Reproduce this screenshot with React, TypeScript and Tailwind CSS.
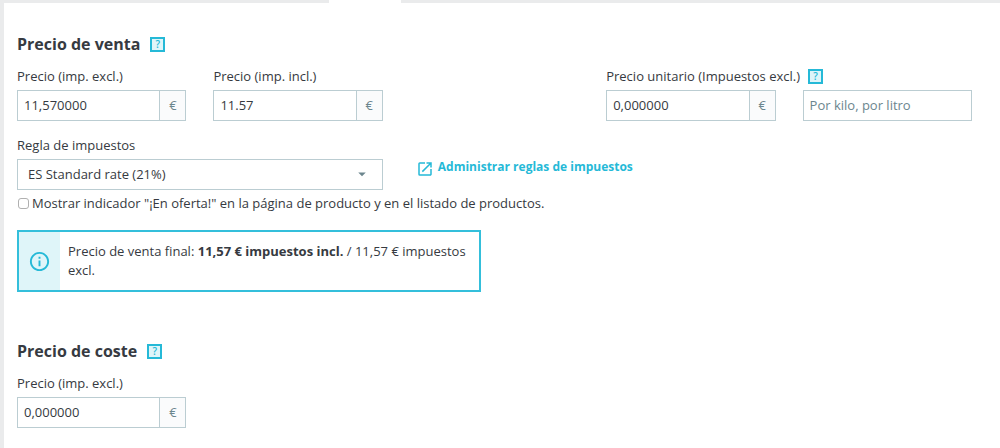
import { useState } from "react";
import type { ReactNode } from "react";
import { MdArrowDropDown, MdInfoOutline, MdOpenInNew } from "react-icons/md";

interface PriceFieldProps {
  id: string;
  label: string;
  initial: string;
  help?: boolean;
}

const HelpButton = () => (
  <button
    type="button"
    aria-label="Ayuda"
    className="flex h-[15px] w-[15px] shrink-0 items-center justify-center border-2 border-[#25b9d7] bg-[#dff5f9] text-[10px] leading-none font-semibold text-[#25b9d7]"
  >
    ?
  </button>
);

const SectionTitle = ({ children }: { children: ReactNode }) => (
  <div className="flex h-6 items-center gap-2.5">
    <h2 className="text-base leading-6 font-bold">{children}</h2>
    <HelpButton />
  </div>
);

const PriceField = ({ id, label, initial, help }: PriceFieldProps) => {
  const [value, setValue] = useState(initial);

  return (
    <div>
      <div className="mb-1 flex h-5 items-center gap-2">
        <label htmlFor={id} className="whitespace-nowrap">
          {label}
        </label>
        {help && <HelpButton />}
      </div>
      <div className="flex h-[31px] border border-[#bbcdd2]">
        <input
          id={id}
          type="text"
          value={value}
          onChange={(e) => setValue(e.target.value)}
          className="w-full min-w-0 bg-white px-1.5 pb-0.5 outline-none"
        />
        <span className="flex w-[26px] shrink-0 items-center justify-center border-l border-[#bbcdd2] bg-[#fafbfc] pb-0.5 text-[#6c868e]">
          €
        </span>
      </div>
    </div>
  );
};

export default function App() {
  const [onSale, setOnSale] = useState(false);

  return (
    <div className="flex min-h-screen flex-col bg-[#eaebec] pl-1 font-['Open_Sans','Noto_Sans',sans-serif] text-[13px] leading-5 text-[#363a41]">
      <div className="flex h-[3px]">
        <div className="ml-[325px] w-[72px] bg-white" />
      </div>

      <main className="flex-1 bg-white pt-[29px] pr-7 pb-5 pl-[13px]">
        <section>
          <SectionTitle>Precio de venta</SectionTitle>
          <div className="mt-2.5 grid grid-cols-5 gap-x-[27px]">
            <PriceField id="price-excl" label="Precio (imp. excl.)" initial="11,570000" />
            <PriceField id="price-incl" label="Precio (imp. incl.)" initial="11.57" />
            <div className="col-start-4">
              <PriceField id="unit-price" label="Precio unitario (Impuestos excl.)" initial="0,000000" help />
            </div>
            <input
              type="text"
              aria-label="Unidad"
              placeholder="Por kilo, por litro"
              className="h-[31px] w-full self-end border border-[#bbcdd2] bg-white px-1.5 pb-0.5 outline-none placeholder:text-[#6c868e]"
            />
          </div>

          <div className="mt-3.5 grid grid-cols-5 gap-x-[27px]">
            <div className="col-span-2">
              <label htmlFor="tax-rule" className="mb-1 block">
                Regla de impuestos
              </label>
              <div className="relative">
                <select
                  id="tax-rule"
                  className="block h-[31px] w-full appearance-none border border-[#bbcdd2] bg-white pr-8 pb-0.5 pl-2.5 outline-none"
                >
                  <option>ES Standard rate (21%)</option>
                </select>
                <MdArrowDropDown className="pointer-events-none absolute top-1.5 right-3 h-[18px] w-[18px] text-[#6c868e]" />
              </div>
            </div>
            <div className="col-span-2 pt-[22px] pl-1.5">
              <a href="#tax-rules" className="flex gap-1 text-xs leading-5 font-bold text-[#25b9d7]">
                <MdOpenInNew className="mt-[3px] h-[18px] w-[18px] shrink-0" />
                Administrar reglas de impuestos
              </a>
            </div>
          </div>

          <div className="mt-[3px] flex items-center gap-[3px]">
            <input
              id="on-sale"
              type="checkbox"
              checked={onSale}
              onChange={(e) => setOnSale(e.target.checked)}
              className="ml-px h-[11px] w-[11px] shrink-0 appearance-none rounded-[3px] border border-[#b0b0b0] bg-white checked:bg-[#25b9d7]"
            />
            <label htmlFor="on-sale">
              Mostrar indicador "¡En oferta!" en la página de producto y en el listado de productos.
            </label>
          </div>

          <div className="mt-[17px] grid grid-cols-2 gap-x-[27px]">
            <div role="status" className="flex border-2 border-[#34bfdb]">
              <div className="flex w-[41px] shrink-0 items-center justify-center bg-[#dff5f9]">
                <MdInfoOutline className="h-[23px] w-[23px] text-[#25b9d7]" />
              </div>
              <p className="px-2 py-2.5 leading-[19px]">
                Precio de venta final: <strong>11,57 € impuestos incl.</strong> / 11,57 € impuestos excl.
              </p>
            </div>
          </div>
        </section>

        <section className="mt-[47px]">
          <SectionTitle>Precio de coste</SectionTitle>
          <div className="mt-2.5 grid grid-cols-5 gap-x-[27px]">
            <PriceField id="cost-price" label="Precio (imp. excl.)" initial="0,000000" />
          </div>
        </section>
      </main>
    </div>
  );
}
